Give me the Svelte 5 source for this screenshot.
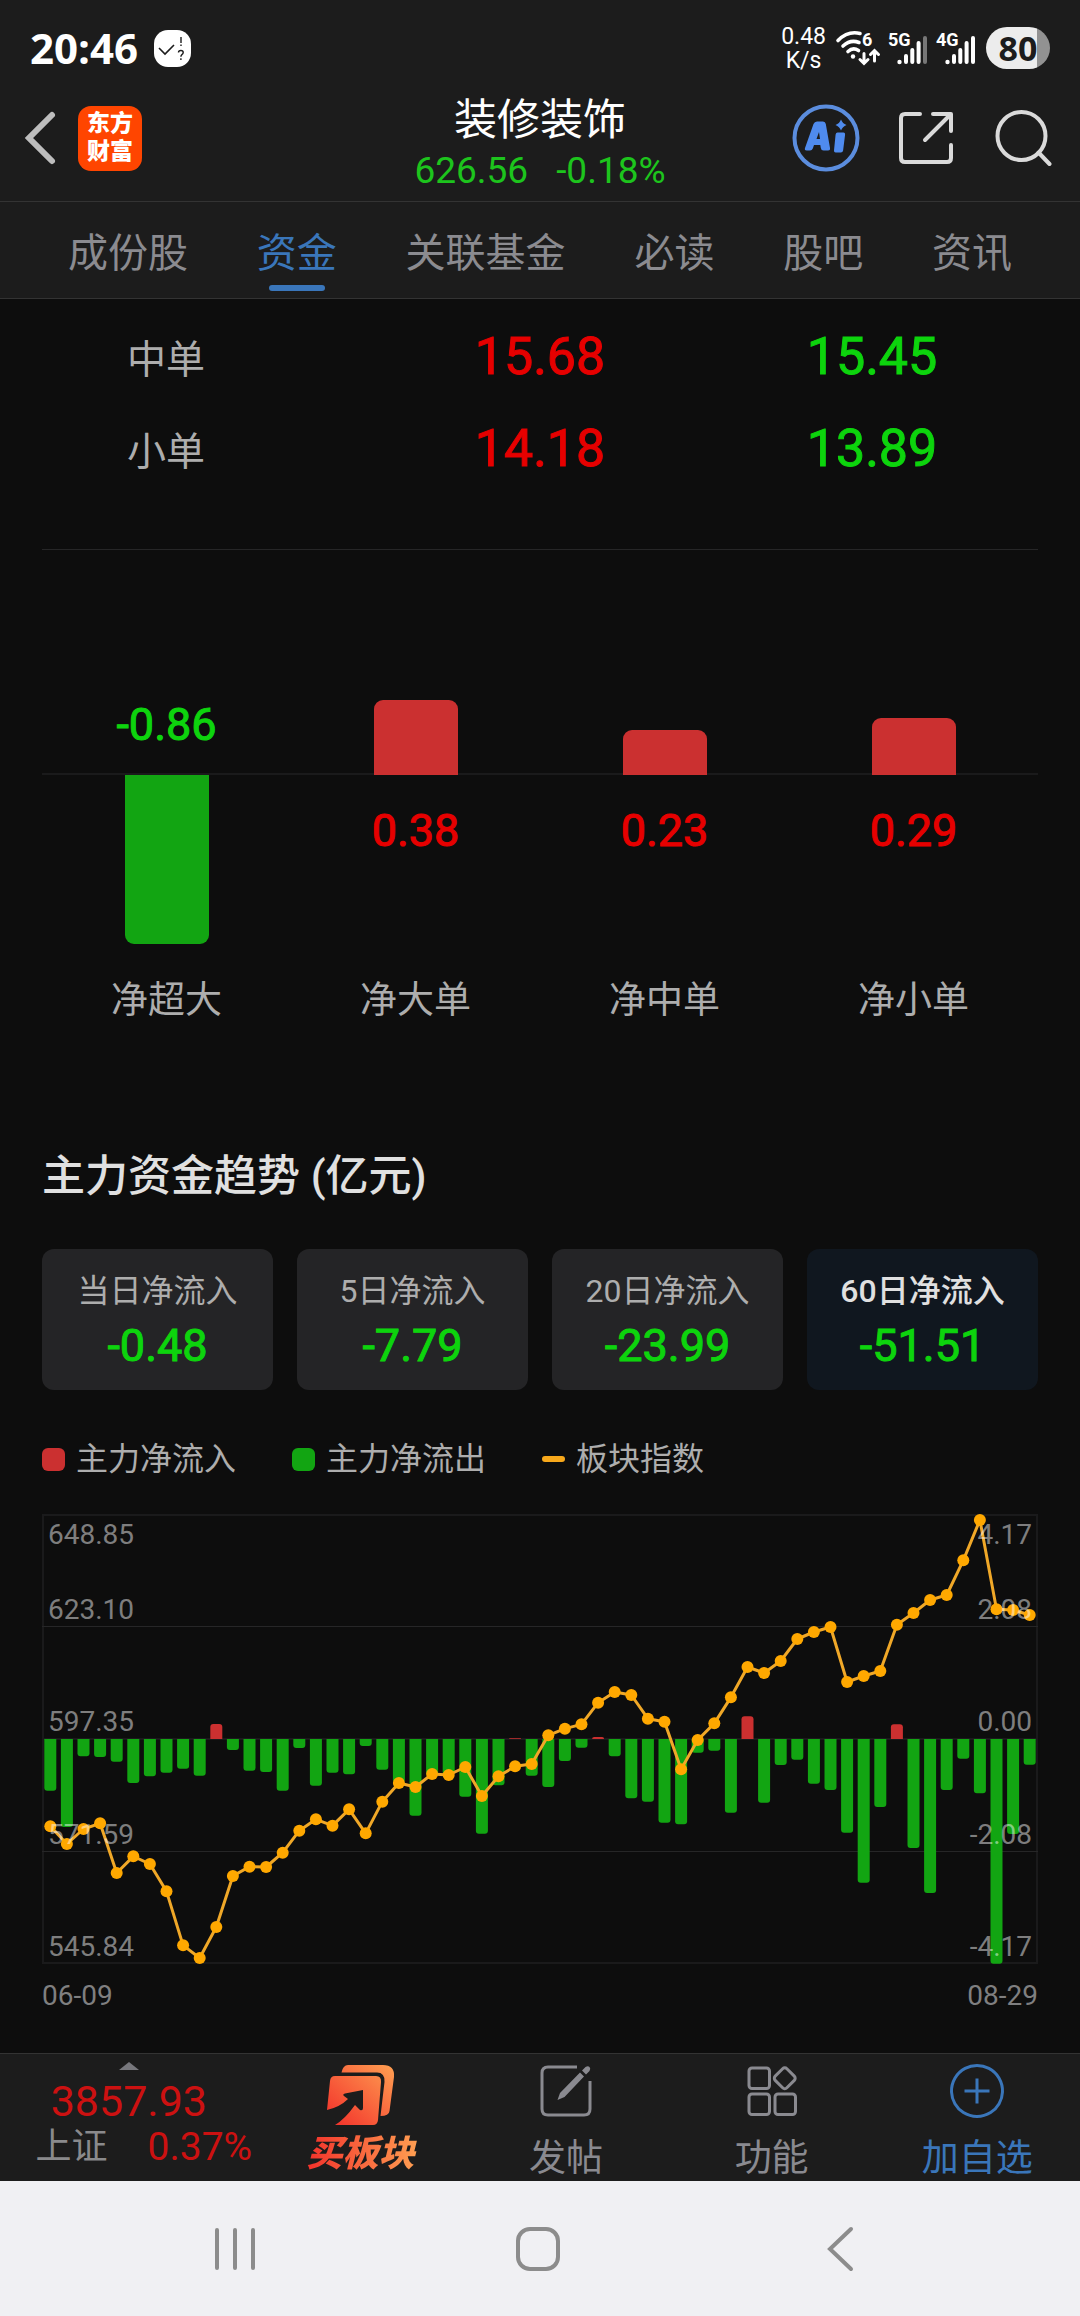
<script>
  const tabs = ['成份股', '资金', '关联基金', '必读', '股吧', '资讯'];
  let activeTab = $state('资金');

  const orders = [
    { name: '中单', inflow: '15.68', outflow: '15.45' },
    { name: '小单', inflow: '14.18', outflow: '13.89' }
  ];

  const nets = [
    { name: '净超大', value: -0.86 },
    { name: '净大单', value: 0.38 },
    { name: '净中单', value: 0.23 },
    { name: '净小单', value: 0.29 }
  ];
  const NET_SCALE = 197;

  const periods = [
    { name: '当日净流入', value: '-0.48' },
    { name: '5日净流入', value: '-7.79' },
    { name: '20日净流入', value: '-23.99' },
    { name: '60日净流入', value: '-51.51' }
  ];
  let activePeriod = $state('60日净流入');

  // Daily main-force flow, in thirds of a chart unit; negative is outflow.
  const flows = [
    -155, -264, -52, -54, -68, -132, -112, -101, -89, -110, 45, -33, -95, -99, -155, -27, -140, -101, -106, -21,
    -92, -130, -230, -108, -108, -173, -284, -139, 2, -110, -144, -66, -26, 6, -52, -178, -188, -251, -256, -41,
    -35, -221, 68, -191, -78, -62, -134, -153, -281, -431, -204, 44, -327, -462, -153, -59, -163, -674, -285, -77
  ];
  // Sector index, measured down from the top of the plot in the same unit.
  const index = [
    937, 990, 945, 928, 1077, 1027, 1050, 1132, 1294, 1332, 1239, 1086, 1058, 1059, 1016, 950, 916, 935, 886, 958,
    863, 807, 819, 780, 783, 759, 846, 787, 757, 750, 664, 644, 631, 566, 534, 543, 614, 623, 766, 678,
    628, 550, 459, 477, 441, 375, 354, 339, 504, 486, 471, 332, 297, 258, 243, 139, 18, 286, 288, 303
  ];
  const ZERO = 225;
  const STEP = 996 / 60;
  const cx = (i) => STEP * (i + 0.5);
  const points = index.map((v, i) => `${cx(i)},${v / 3}`).join(' ');

  function barPath(v, i) {
    const x = cx(i) - 6;
    const h = Math.abs(v) / 3;
    const r = Math.min(3, h);
    const s = v < 0 ? 1 : -1;
    const end = ZERO + s * h;
    return `M${x} ${ZERO}V${end - s * r}Q${x} ${end} ${x + r} ${end}H${x + 12 - r}Q${x + 12} ${end} ${x + 12} ${end - s * r}V${ZERO}Z`;
  }

  const leftAxis = [
    ['648.85', 30],
    ['623.10', 105],
    ['597.35', 217],
    ['571.59', 330],
    ['545.84', 442]
  ];
  const rightAxis = [
    ['4.17', 30],
    ['2.08', 105],
    ['0.00', 217],
    ['-2.08', 330],
    ['-4.17', 442]
  ];
</script>

<div class="page">
  <header class="top">
    <div class="status">
      <span class="clock">20:46</span>
      <svg class="note" viewBox="0 0 37 37" aria-hidden="true">
        <rect width="37" height="37" rx="14" fill="#fff" />
        <path d="M5 18l6 6 9-9" fill="none" stroke="#1c1c1c" stroke-width="1.6" />
        <path d="M27 7v6M27 14.500v1.600M24.500 22.500q0-2 2.400-2 2.300 0 2.300 2 0 1.300-1.300 2.100-1 .7-1 2.200M26.900 28.300v1.600" fill="none" stroke="#1c1c1c" stroke-width="1.400" />
      </svg>
      <span class="spacer"></span>
      <span class="rate"><span>0.48</span><span>K/s</span></span>
      <svg class="wifi" viewBox="0 0 44 36" aria-hidden="true">
        <g fill="none" stroke="#fff" stroke-width="3.600" stroke-linecap="round">
          <path d="M2 10.500Q12 .5 24 3.500" />
          <path d="M7 16Q14.500 9 23 12.500" />
          <path d="M12 21.500Q17 17 22.500 20.500" />
          <path d="M28 23.500v9M24 29.500l4 4 4-4M38.500 31v-9.500M34.500 24.500l4-4 4 4" stroke-width="3" />
        </g>
        <circle cx="17" cy="26.500" r="2.200" fill="#fff" />
        <text x="26" y="16" class="tiny">6</text>
      </svg>
      <svg class="signal" viewBox="0 0 40 36" aria-hidden="true">
        <text x="0" y="16" class="tiny">5G</text>
        <circle cx="11.500" cy="32" r="2.200" fill="#fff" />
        <g stroke="#fff" stroke-width="4" stroke-linecap="round">
          <path d="M18 26v6M24.300 20v12M30.600 13v19" />
          <path d="M37 8v24" stroke="#777" />
        </g>
      </svg>
      <svg class="signal" viewBox="0 0 40 36" aria-hidden="true">
        <text x="0" y="16" class="tiny">4G</text>
        <circle cx="11.500" cy="32" r="2.200" fill="#fff" />
        <path d="M18 26v6M24.300 20v12M30.600 13v19M37 8v24" stroke="#fff" stroke-width="4" stroke-linecap="round" />
      </svg>
      <span class="battery">80</span>
    </div>

    <div class="title-row">
      <div class="left">
        <button class="icon" aria-label="返回">
          <svg class="back" viewBox="4 0 28 54"><path d="M28 4L5 27l23 23" fill="none" stroke="#bdbdbd" stroke-width="6" stroke-linecap="round" /></svg>
        </button>
        <a class="brand" href="#home"><span>东方</span><span>财富</span></a>
      </div>
      <div class="heading">
        <h1>装修装饰</h1>
        <p><span>626.56</span><span>-0.18%</span></p>
      </div>
      <div class="right">
        <button class="icon" aria-label="AI">
          <svg class="ai" viewBox="0 0 68 68">
            <circle cx="34" cy="34" r="31.500" fill="none" stroke="#5b8dde" stroke-width="4" />
            <path fill="#4f8bee" fill-rule="evenodd" d="M13 44L21.500 20q1-2.500 3.500-2.500h6q2.400 0 2.800 2.500L38 44q.4 2.500-2 2.500h-4.500q-2.300 0-2.700-2.500l-.5-3H22l-1.200 3.500q-.8 2-2.800 2h-3.300q-2.500 0-1.700-2.500zM24.500 35h3.500l-1-7z" />
            <path fill="#4f8bee" d="M45.500 28.500h6q1.800 0 1.600 2l-2 16q-.3 2-2.300 2h-5.200q-1.800 0-1.600-2l1.600-16q.3-2 1.900-2zM49 15.500q1.500 4 5.500 5.500-4 1.500-5.500 5.500-1.500-4-5.500-5.500 4-1.500 5.500-5.500z" />
          </svg>
        </button>
        <button class="icon" aria-label="分享">
          <svg class="share" viewBox="0 0 58 58"><path d="M23 5H8q-4 0-4 4v40q0 4 4 4h42q4 0 4-4V36M36 5h18v17M52 7L28 31" fill="none" stroke="#dadada" stroke-width="4" stroke-linecap="round" stroke-linejoin="round" /></svg>
        </button>
        <button class="icon" aria-label="搜索">
          <svg class="search" viewBox="0 0 60 60"><g fill="none" stroke="#dadada" stroke-width="4" stroke-linecap="round"><circle cx="29.500" cy="28" r="24" /><path d="M46.500 44.500l11 11.500" /></g></svg>
        </button>
      </div>
    </div>

    <nav class="tabs">
      {#each tabs as tab}
        <button class:active={tab === activeTab} onclick={() => (activeTab = tab)}>{tab}</button>
      {/each}
    </nav>
  </header>

  <main>
    <table class="orders">
      <tbody>
        {#each orders as o}
          <tr>
            <th scope="row">{o.name}</th>
            <td class="up">{o.inflow}</td>
            <td class="down">{o.outflow}</td>
          </tr>
        {/each}
      </tbody>
    </table>

    <section class="nets">
      {#each nets as n}
        <div class="net">
          <div class="upper">
            {#if n.value > 0}
              <div class="bar in" style="height: {n.value * NET_SCALE}px"></div>
            {:else}
              <span class="down">{n.value.toFixed(2)}</span>
            {/if}
          </div>
          <div class="lower">
            {#if n.value > 0}
              <span class="up">{n.value.toFixed(2)}</span>
            {:else}
              <div class="bar out" style="height: {-n.value * NET_SCALE}px"></div>
            {/if}
          </div>
          <div class="name">{n.name}</div>
        </div>
      {/each}
    </section>

    <section class="trend">
      <h2>主力资金趋势 (亿元)</h2>
      <div class="cards">
        {#each periods as p}
          <button class="card" class:active={p.name === activePeriod} onclick={() => (activePeriod = p.name)}>
            <span class="label">{p.name}</span>
            <span class="value">{p.value}</span>
          </button>
        {/each}
      </div>

      <ul class="legend">
        <li><i class="in"></i>主力净流入</li>
        <li><i class="out"></i>主力净流出</li>
        <li><i class="line"></i>板块指数</li>
      </ul>

      <svg class="chart" viewBox="0 0 996 450" role="img" aria-label="主力资金趋势">
        <rect x="1" y="1" width="994" height="448" fill="none" stroke="#1a1a1b" stroke-width="2" />
        <path d="M0 112.500H996M0 337.500H996" stroke="#262627" stroke-width="1" />
        <path d="M0 225H996" stroke="#1a1a1b" stroke-width="2" />
        {#each flows as v, i}
          <path d={barPath(v, i)} fill={v < 0 ? '#12a512' : '#cb3030'} />
        {/each}
        <polyline {points} fill="none" stroke="#f0a828" stroke-width="3" stroke-linejoin="round" />
        {#each index as v, i}
          <circle cx={cx(i)} cy={v / 3} r="6" fill="#ffa800" />
        {/each}
        {#each leftAxis as [t, y]}
          <text x="6" {y}>{t}</text>
        {/each}
        {#each rightAxis as [t, y]}
          <text x="990" {y} text-anchor="end">{t}</text>
        {/each}
      </svg>
      <div class="dates"><span>06-09</span><span>08-29</span></div>
    </section>
  </main>

  <footer class="toolbar">
    <button class="market">
      <svg class="tri" viewBox="0 0 20 8" aria-hidden="true"><path d="M0 8L10 0l10 8z" fill="#77777c" /></svg>
      <span class="points">3857.93</span>
      <span class="pair"><span class="mname">上证</span><span class="pct">0.37%</span></span>
    </button>
    <button class="tool buy">
      <svg viewBox="-1 -2 70 64" aria-hidden="true">
        <defs>
          <linearGradient id="flame" x1="0" y1="1" x2="1" y2="0"><stop offset="0" stop-color="#f22d29" /><stop offset="1" stop-color="#ffa052" /></linearGradient>
        </defs>
        <path fill="url(#flame)" d="M15.500 7.500Q17 0 22 0H57Q69 0 68 12L63.500 46Q63 51 54.500 51L58.500 17Q59 7.500 51 7.500ZM1 45L4 16Q4.500 11 9 11H50Q55.500 11 55 17L52 55Q51.500 60 47 60H9Q19 54 29 40L34 45Q37 46 37 43V25L19 28.500Q16 29.500 18 31L22 34Q14 42 1 45Z" />
      </svg>
      <span>买板块</span>
    </button>
    <button class="tool">
      <svg viewBox="0 0 56 56" aria-hidden="true">
        <path d="M39 4H10q-6 0-6 6v36q0 6 6 6h36q6 0 6-6V18" fill="none" stroke="#8a8a90" stroke-width="3" />
        <path d="M19.500 37l2.500-7L42 9.500l4 4L26.500 34zM44 7.500l3.500-3.500q2.500-1.500 4 0 1.500 1.500 0 4L48 11.500z" fill="#8a8a90" />
      </svg>
      <span>发帖</span>
    </button>
    <button class="tool">
      <svg viewBox="0 0 56 56" aria-hidden="true">
        <g fill="none" stroke="#8a8a90" stroke-width="3">
          <rect x="5" y="5" width="20.500" height="20.500" rx="3" />
          <rect x="5" y="31" width="20.500" height="20.500" rx="3" />
          <rect x="31" y="31" width="20.500" height="20.500" rx="3" />
          <rect x="32.500" y="7" width="16.500" height="16.500" rx="3" transform="rotate(45 40.750 15.250)" />
        </g>
      </svg>
      <span>功能</span>
    </button>
    <button class="tool add">
      <svg viewBox="0 0 56 56" aria-hidden="true"><path d="M28 15.500v25M15.500 28h25M28 2.500a25.500 25.500 0 1 0 .01 0z" fill="none" stroke="#3a76ba" stroke-width="3" /></svg>
      <span>加自选</span>
    </button>
  </footer>

  <nav class="system">
    <button class="icon" aria-label="最近任务"><svg viewBox="0 0 48 48"><path d="M6 5v38M24 5v38M42 5v38" stroke="#8c8c8c" stroke-width="4" stroke-linecap="round" /></svg></button>
    <button class="icon" aria-label="主屏幕"><svg viewBox="0 0 48 48"><rect x="4" y="4" width="40" height="40" rx="12" fill="none" stroke="#8c8c8c" stroke-width="4" /></svg></button>
    <button class="icon" aria-label="后退"><svg viewBox="0 0 48 48"><path d="M34 4L13 24l21 20" fill="none" stroke="#8c8c8c" stroke-width="4" stroke-linecap="round" /></svg></button>
  </nav>
</div>

<style>
  :global(body) {
    margin: 0;
    background: #0d0d0d;
  }
  .page {
    min-height: 100vh;
    display: flex;
    flex-direction: column;
    background: #0d0d0d;
    font-family: Roboto, 'Noto Sans CJK SC', sans-serif;
    color: #adadad;
  }
  button {
    font: inherit;
    color: inherit;
    background: none;
    border: 0;
    padding: 0;
    cursor: pointer;
  }
  h1, h2, p, ul {
    margin: 0;
    padding: 0;
    font-weight: 400;
  }
  svg {
    display: block;
  }
  .icon {
    display: flex;
  }
  .up {
    color: #e60000;
  }
  .down {
    color: #0dd40d;
  }
  .up,
  .down,
  .value {
    -webkit-text-stroke: 1px currentColor;
  }

  .top {
    background: #1c1c1c;
    border-bottom: 1px solid #333;
  }
  .status {
    display: flex;
    align-items: center;
    height: 54px;
    padding: 21px 30px 0;
    color: #fff;
  }
  .clock {
    font: 700 42px/54px 'Open Sans', sans-serif;
  }
  .note {
    width: 37px;
    height: 37px;
    margin-left: 16px;
  }
  .spacer {
    flex: 1;
  }
  .rate {
    display: flex;
    flex-direction: column;
    align-items: center;
    padding-top: 2px;
    font-size: 23px;
    line-height: 24px;
  }
  .wifi {
    width: 44px;
    height: 36px;
    margin-left: 10px;
    overflow: visible;
  }
  .signal {
    width: 40px;
    height: 36px;
    margin-left: 8px;
    overflow: visible;
  }
  .tiny {
    font: 700 18px/20px Roboto, sans-serif;
    fill: #fff;
  }
  .battery {
    width: 64px;
    margin-left: 10px;
    border-radius: 21px;
    background: linear-gradient(90deg, #ececec 79%, #929292 79%);
    color: #1c1c1c;
    font: 700 34px/42px 'Open Sans', sans-serif;
    text-align: center;
  }

  .title-row {
    display: grid;
    grid-template-columns: 1fr auto 1fr;
    align-items: center;
    height: 126px;
    padding: 0 28px;
    border-bottom: 1px solid #333;
  }
  .left {
    display: flex;
    align-items: center;
    gap: 22px;
  }
  .back {
    width: 28px;
    height: 54px;
    overflow: visible;
  }
  .brand {
    display: flex;
    flex-direction: column;
    justify-content: center;
    align-items: center;
    width: 64px;
    height: 65px;
    border-radius: 13px;
    background: #ff4500;
    color: #fff;
    font-size: 23px;
    line-height: 28px;
    font-weight: 900;
    text-decoration: none;
  }
  .heading {
    padding-top: 14px;
    text-align: center;
  }
  h1 {
    color: #fff;
    font-size: 43px;
    line-height: 52px;
  }
  .heading p {
    display: flex;
    gap: 28px;
    color: #1dc41d;
    font-size: 37px;
    line-height: 50px;
  }
  .right {
    display: flex;
    justify-content: flex-end;
    align-items: center;
    gap: 37px;
  }
  .ai {
    width: 68px;
    height: 68px;
  }
  .share {
    width: 58px;
    height: 58px;
  }
  .search {
    width: 60px;
    height: 60px;
  }

  .tabs {
    display: flex;
    justify-content: space-between;
    padding: 0 68px;
  }
  .tabs button {
    display: flex;
    flex-direction: column;
    align-items: center;
    height: 96px;
    padding-top: 22px;
    font-size: 40px;
    line-height: 60px;
    color: #8b8b90;
  }
  .tabs .active {
    color: #3a76ba;
  }
  .tabs .active::after {
    content: '';
    width: 56px;
    height: 6px;
    margin-top: 1px;
    border-radius: 3px;
    background: #3a76ba;
  }

  main {
    flex: 1;
    padding: 11px 42px 37px;
  }
  .orders {
    width: 100%;
    table-layout: fixed;
    border-collapse: collapse;
  }
  .orders th,
  .orders td {
    height: 92px;
    padding: 0;
    text-align: center;
    vertical-align: middle;
  }
  .orders th {
    padding-right: 84px;
    font-size: 39px;
    font-weight: 400;
  }
  .orders td {
    font-size: 52px;
  }

  .nets {
    display: grid;
    grid-template-columns: repeat(4, 1fr);
    margin-top: 55px;
    border-top: 1px solid #262627;
    text-align: center;
  }
  .upper,
  .lower {
    display: flex;
    flex-direction: column;
    align-items: center;
  }
  .upper {
    height: 225px;
    justify-content: flex-end;
  }
  .lower {
    height: 203px;
    box-shadow: 0 -2px #1a1a1b;
  }
  .net {
    font-size: 45px;
    line-height: 54px;
  }
  .upper .bar {
    position: relative;
    border-radius: 9px 9px 0 0;
  }
  .lower .bar {
    border-radius: 0 0 9px 9px;
  }
  .bar {
    width: 84px;
  }
  .in {
    background: #cb3030;
  }
  .out {
    background: #12a512;
  }
  .upper span {
    padding-bottom: 23px;
  }
  .lower span {
    padding-top: 29px;
  }
  .name {
    font-size: 37px;
    line-height: 46px;
  }

  h2 {
    margin-top: 122px;
    color: #e0e0e0;
    font-size: 43px;
    line-height: 60px;
    font-weight: 500;
  }
  .cards {
    display: grid;
    grid-template-columns: repeat(4, 1fr);
    gap: 24px;
    margin-top: 43px;
  }
  .card {
    display: flex;
    flex-direction: column;
    align-items: center;
    gap: 5px;
    padding: 20px 0 16px;
    border-radius: 12px;
    background: #242426;
  }
  .card.active {
    background: #10171f;
  }
  .label {
    font-size: 32px;
    line-height: 44px;
  }
  .active .label {
    color: #e0e0e0;
    font-weight: 500;
  }
  .value {
    color: #0dd40d;
    font-size: 45px;
    line-height: 56px;
  }
  .legend {
    display: flex;
    gap: 56px;
    margin-top: 46px;
    list-style: none;
    font-size: 32px;
    line-height: 46px;
  }
  .legend li {
    display: flex;
    align-items: center;
    gap: 11px;
  }
  .legend i {
    width: 23px;
    height: 23px;
    border-radius: 6px;
  }
  .legend .line {
    height: 6px;
    border-radius: 3px;
    background: #f7a81b;
  }
  .chart {
    width: 100%;
    margin-top: 32px;
  }
  .chart text {
    font-size: 28px;
    fill: rgba(255, 255, 255, 0.48);
  }
  .dates {
    display: flex;
    justify-content: space-between;
    margin-top: 12px;
    color: #7f7f80;
    font-size: 28px;
    line-height: 40px;
  }

  .toolbar {
    display: grid;
    grid-template-columns: 257fr repeat(4, 205fr);
    height: 127px;
    background: #1c1c1c;
    border-top: 1px solid #333;
  }
  .market,
  .tool {
    display: flex;
    flex-direction: column;
    align-items: center;
  }
  .market {
    padding-top: 8px;
  }
  .tri {
    width: 20px;
    height: 8px;
  }
  .points {
    margin-top: 9px;
    color: #cc1111;
    font-size: 43px;
    line-height: 44px;
  }
  .pair {
    display: flex;
    align-items: center;
    gap: 40px;
    padding-left: 30px;
    line-height: 48px;
  }
  .mname {
    font-size: 36px;
    color: #8a8a8c;
  }
  .pct {
    font-size: 39px;
    color: #cc1111;
  }
  .tool {
    padding-top: 9px;
    gap: 20px;
    color: #8a8a90;
    font-size: 37px;
    line-height: 40px;
  }
  .tool svg {
    width: 56px;
    height: 56px;
  }
  .tool.buy svg {
    width: 70px;
    height: 64px;
  }
  .buy {
    gap: 7px;
    font-size: 36px;
    font-weight: 900;
    font-style: italic;
  }
  .buy span {
    padding: 0 4px;
    background: linear-gradient(90deg, #f22d29, #ffa052);
    background-clip: text;
    color: transparent;
  }
  .add {
    color: #3a76ba;
  }

  .system {
    display: grid;
    grid-template-columns: repeat(3, 1fr);
    align-items: center;
    justify-items: center;
    height: 135px;
    padding: 0 87px 0 83px;
    background: #f0f0f3;
  }
  .system svg {
    width: 48px;
    height: 48px;
  }
</style>
